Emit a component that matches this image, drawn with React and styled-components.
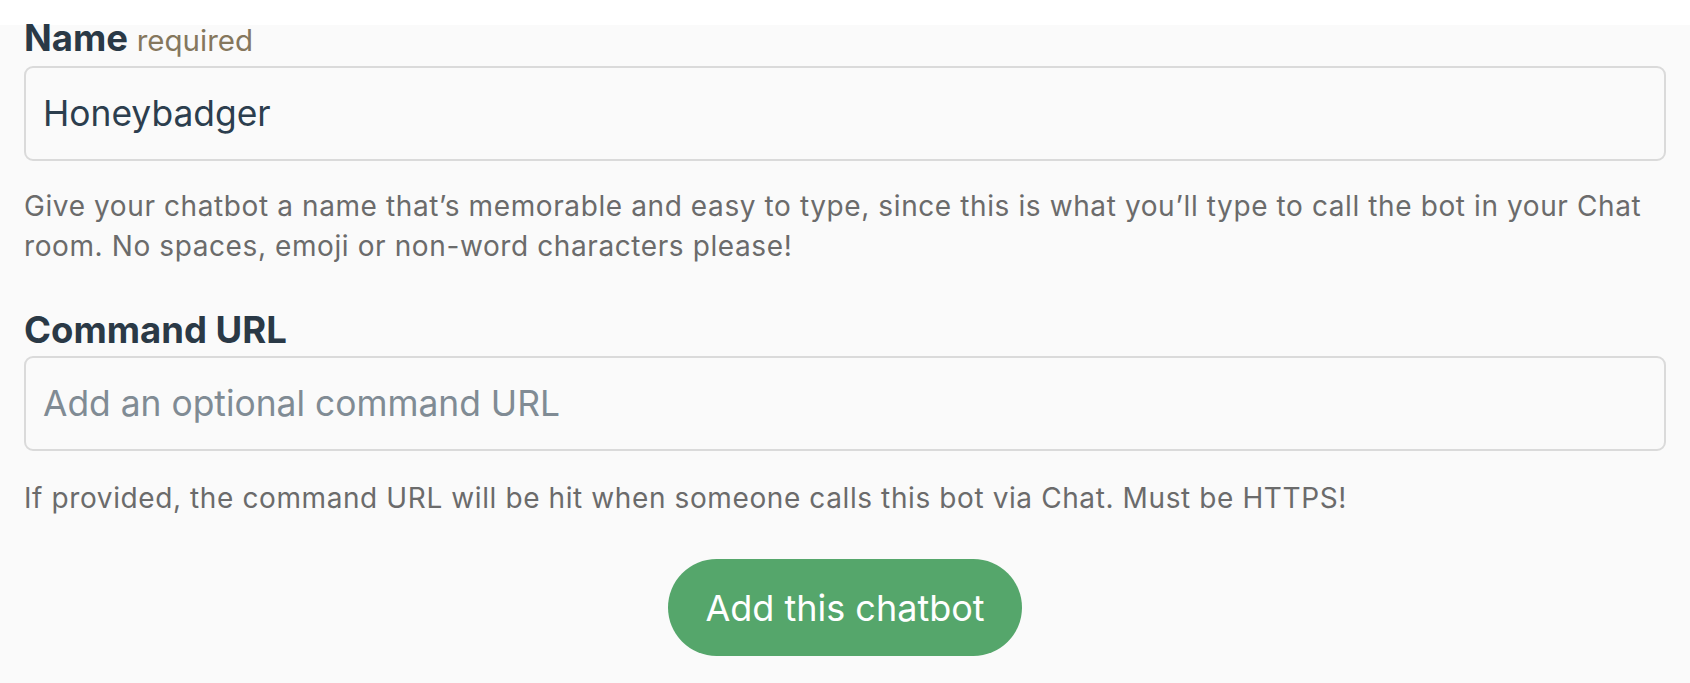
import React from "react";
import styled, { createGlobalStyle } from "styled-components";

const GlobalStyle = createGlobalStyle`
  html, body {
    margin: 0;
    padding: 0;
    background: #ffffff;
  }
  body {
    font-family: Inter, "Noto Sans", "Liberation Sans", sans-serif;
  }
`;

const Panel = styled.form`
  margin-top: 25px;
  background: #fafafa;
  padding: 0 24px 27px;
  display: flex;
  flex-direction: column;
`;

const Field = styled.div`
  display: flex;
  flex-direction: column;
  margin-top: ${(p) => (p.$first ? "-9px" : "42px")};
`;

const Label = styled.label`
  font-size: 36.5px;
  line-height: 44px;
  font-weight: 700;
  color: #2a3946;
  margin-bottom: 4px;
`;

const Required = styled.span`
  font-size: 29.5px;
  font-weight: 400;
  color: #85775d;
`;

const TextInput = styled.input`
  box-sizing: border-box;
  width: 100%;
  height: 95px;
  padding: 0 17px;
  border: 2px solid #dadada;
  border-radius: 9px;
  background: #fafafa;
  font-family: inherit;
  font-size: 35.4px;
  color: #2c3e4e;
  outline: none;

  &::placeholder {
    color: #808b94;
  }
`;

const Hint = styled.p`
  margin: ${(p) => (p.$loose ? "27px" : "25px")} 0 0;
  font-size: 28px;
  line-height: 40px;
  letter-spacing: 0.6px;
  color: #6b6b6b;
`;

const Actions = styled.div`
  display: flex;
  justify-content: center;
  margin-top: 41px;
`;

const SubmitButton = styled.button`
  height: 97px;
  padding: 0 37px;
  border: none;
  border-radius: 49px;
  background: #55a66b;
  color: #ffffff;
  font-family: inherit;
  font-size: 36px;
  cursor: pointer;
`;

export default function App() {
  return (
    <>
      <GlobalStyle />
      <Panel onSubmit={(e) => e.preventDefault()}>
        <Field $first>
          <Label htmlFor="bot-name">
            Name <Required>required</Required>
          </Label>
          <TextInput id="bot-name" defaultValue="Honeybadger" />
          <Hint>
            Give your chatbot a name that’s memorable and easy to type, since this is what you’ll type to call the bot in your Chat
            room. No spaces, emoji or non-word characters please!
          </Hint>
        </Field>
        <Field>
          <Label htmlFor="bot-url">Command URL</Label>
          <TextInput id="bot-url" placeholder="Add an optional command URL" />
          <Hint $loose>
            If provided, the command URL will be hit when someone calls this bot via Chat. Must be HTTPS!
          </Hint>
        </Field>
        <Actions>
          <SubmitButton type="submit">Add this chatbot</SubmitButton>
        </Actions>
      </Panel>
    </>
  );
}
